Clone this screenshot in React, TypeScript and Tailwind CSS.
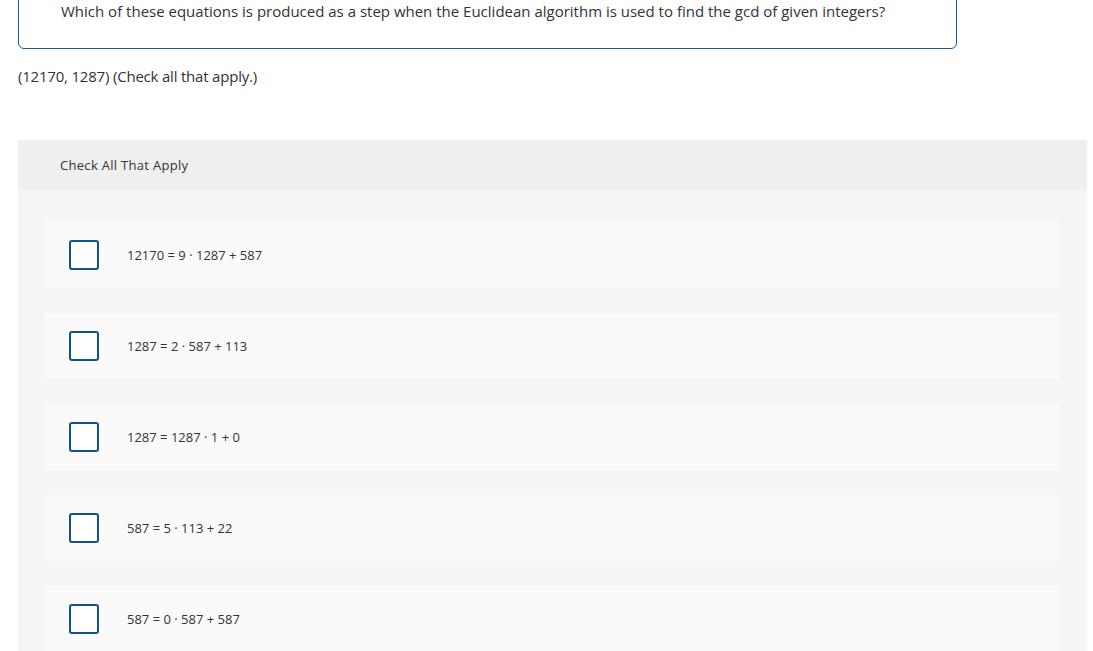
import React, { FC, useState } from "react";

const options = [
  "12170 = 9 · 1287 + 587",
  "1287 = 2 · 587 + 113",
  "1287 = 1287 · 1 + 0",
  "587 = 5 · 113 + 22",
  "587 = 0 · 587 + 587",
];

const Option: FC<{ label: string }> = ({ label }) => {
  const [checked, setChecked] = useState(false);
  return (
    <div
      className="flex h-[66px] items-center rounded-[3px] bg-[#fafafa] pl-[25px]"
      onClick={() => setChecked(!checked)}
    >
      <div className="flex h-[30px] w-[30px] items-center justify-center rounded-[3px] border-2 border-[#12508e] bg-white text-[#12508e]">
        {checked ? "✓" : null}
      </div>
      <span className="ml-[28px] pt-[2px] text-[13px] text-[#333]">{label}</span>
    </div>
  );
};

export default function App() {
  return (
    <div className="min-h-screen overflow-hidden bg-white font-['Open_Sans',sans-serif] text-[#333]">
      <div className="ml-[18px] mr-[136px] -mt-[30px] rounded-[6px] border border-[#1d5596] pt-[30px] pb-[27px] pl-[42px]">
        <p className="text-[15px] leading-[20px]">
          Which of these equations is produced as a step when the Euclidean algorithm is used to find the gcd of given integers?
        </p>
      </div>
      <p className="ml-[18px] mt-[17px] text-[15px] leading-[20px] tracking-[-0.2px]">(12170, 1287) (Check all that apply.)</p>
      <div className="ml-[18px] mr-[6px] mt-[54px] bg-[#f5f5f5]">
        <div className="flex h-[50px] items-center bg-[#efefef] pl-[42px] pt-[2px] text-[13px] tracking-[0.3px]">Check All That Apply</div>
        <div className="flex flex-col gap-[25px] pt-[32px] pb-[30px] pl-[26px] pr-[28px]">
          {options.map((o) => (
            <Option key={o} label={o} />
          ))}
        </div>
      </div>
    </div>
  );
}
